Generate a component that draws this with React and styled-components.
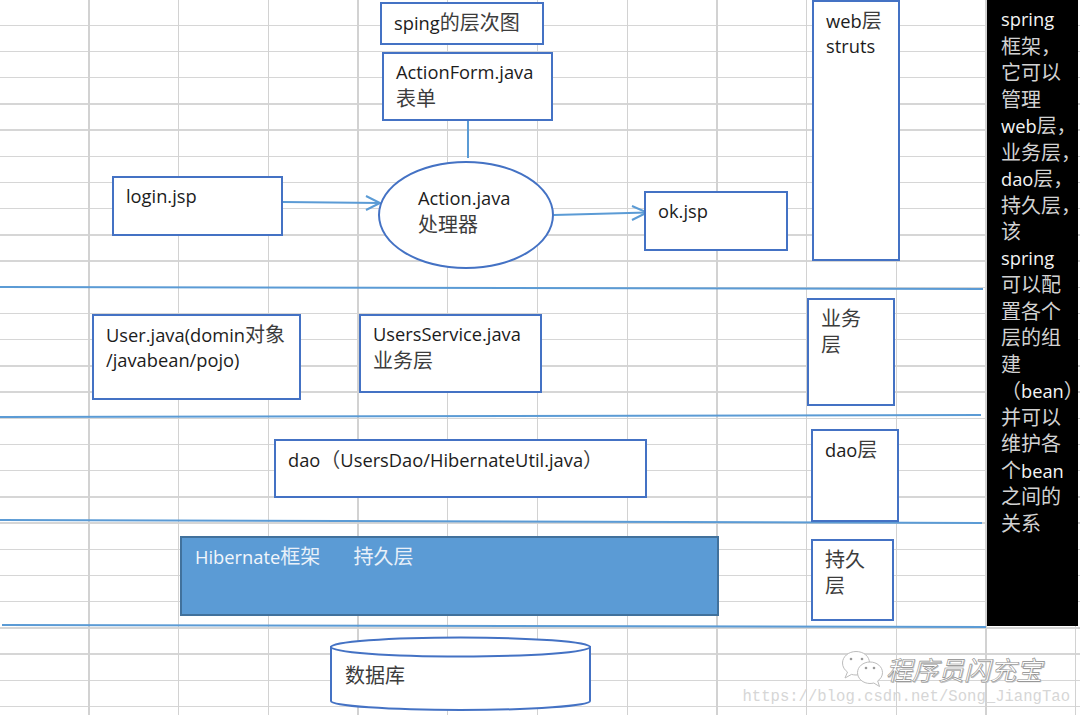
import React from "react";
import styled, { createGlobalStyle } from "styled-components";

const GlobalStyle = createGlobalStyle`
  html, body {
    margin: 0;
    padding: 0;
    background: #fff;
  }
`;

//splits latin and chinese so the chinese can sit a bit larger, like the original
const Label = ({ children }) =>
  children.split(/([^\x00-\x7f]+)/).map((part, i) =>
    i % 2 ? <Han key={i}>{part}</Han> : part
  );

const Lines = ({ items }) =>
  items.map((line, i) => (
    <Line key={i}>
      <Label>{line}</Label>
    </Line>
  ));

const sideTop = [
  "spring",
  "框架，",
  "它可以",
  "管理",
  "web层，",
  "业务层，",
  "dao层，",
  "持久层，",
  "该",
  "spring",
  "可以配",
  "置各个",
  "层的组",
  "建",
];

const sideBottom = ["并可以", "维护各", "个bean", "之间的", "关系"];

function App() {
  return (
    <Sheet>
      <GlobalStyle />
      <Connectors viewBox="0 0 1080 715">
        <line x1="0" y1="287" x2="983" y2="289" />
        <line x1="0" y1="417" x2="981" y2="415" />
        <line x1="0" y1="520" x2="982" y2="523" />
        <line x1="2" y1="625" x2="986" y2="627" />
        <line x1="468" y1="121" x2="468" y2="158" />
        <line x1="283" y1="202" x2="380" y2="203" />
        <polyline points="366,196 380,203 366,210" />
        <line x1="554" y1="215" x2="647" y2="212.5" />
        <polyline points="632,206 647,212.5 632,220" />
      </Connectors>

      <Node $x={380} $y={2} $w={164} $h={43}>
        <Lines items={["sping的层次图"]} />
      </Node>
      <Node $x={382} $y={52} $w={171} $h={69}>
        <Lines items={["ActionForm.java", "表单"]} />
      </Node>
      <Node $x={112} $y={176} $w={171} $h={60}>
        <Lines items={["login.jsp"]} />
      </Node>
      <Handler>
        <Lines items={["Action.java", "处理器"]} />
      </Handler>
      <Node $x={644} $y={191} $w={144} $h={60}>
        <Lines items={["ok.jsp"]} />
      </Node>
      <Node $x={812} $y={0} $w={88} $h={261}>
        <Lines items={["web层", "struts"]} />
      </Node>

      <Node $x={92} $y={314} $w={209} $h={86}>
        <Lines items={["User.java(domin对象", "/javabean/pojo)"]} />
      </Node>
      <Node $x={359} $y={314} $w={183} $h={79}>
        <Lines items={["UsersService.java", "业务层"]} />
      </Node>
      <Node $x={807} $y={298} $w={88} $h={108}>
        <Lines items={["业务", "层"]} />
      </Node>

      <Node $x={274} $y={439} $w={373} $h={59}>
        <Lines items={["dao（UsersDao/HibernateUtil.java）"]} />
      </Node>
      <Node $x={811} $y={429} $w={88} $h={93}>
        <Lines items={["dao层"]} />
      </Node>

      <Persistence>
        <Lines items={["Hibernate框架       持久层"]} />
      </Persistence>
      <Node $x={811} $y={539} $w={83} $h={82}>
        <Lines items={["持久", "层"]} />
      </Node>

      <Database viewBox="0 0 1080 715">
        <path d="M331 647 L331 701 A129.5 9 0 0 0 590 701 L590 647 Z" />
        <ellipse cx="460.5" cy="647" rx="129.5" ry="9.5" />
      </Database>
      <DatabaseName>
        <Lines items={["数据库"]} />
      </DatabaseName>

      <SidePanel>
        <Lines items={sideTop} />
        <Line>
          <Han>（</Han>bean<ClosingParen>）</ClosingParen>
        </Line>
        <Lines items={sideBottom} />
      </SidePanel>

      <Watermark>
        <Account>
          <WechatMark viewBox="0 0 44 38">
            <path d="M15 1.500C7.500 1.500 1.500 6.700 1.500 13c0 3.700 2 7 5 9l-2.500 6 6.500-3.600c1.400.4 3 .6 4.500.6 7.500 0 13.500-5.200 13.500-12S22.500 1.500 15 1.500z" />
            <path d="M29 12c-7 0-12.500 4.800-12.500 10.700S22 33.500 29 33.500c1.300 0 2.600-.2 3.800-.5l5.700 3.500-1.800-5.600c3-2 4.800-5 4.800-8.200C41.500 16.800 36 12 29 12z" />
            <circle className="eye" cx="10" cy="9" r="1.300" />
            <circle className="eye" cx="21" cy="9" r="1.300" />
            <circle className="eye" cx="25" cy="18" r="1.300" />
            <circle className="eye" cx="33" cy="18" r="1.300" />
          </WechatMark>
          <AccountName>程序员闪充宝</AccountName>
        </Account>
        <BlogUrl>https://blog.csdn.net/Song_JiangTao</BlogUrl>
      </Watermark>
    </Sheet>
  );
}

const Sheet = styled.div`
  position: relative;
  display: flex;
  justify-content: flex-end;
  align-items: flex-start;
  width: 1080px;
  height: 715px;
  box-sizing: border-box;
  padding-right: 2px;
  overflow: hidden;
  background-color: #fff;
  background-image: repeating-linear-gradient(
      to right,
      transparent 0 88.4px,
      #d2d2d2 88.4px 89.7px
    ),
    repeating-linear-gradient(
      to bottom,
      transparent 0 24.6px,
      #d6d6d6 24.6px 26px,
      transparent 26px 26.2px
    );
  font-family: "Open Sans", "Noto Sans", "Noto Sans CJK SC", sans-serif;
  font-size: 18.3px;
  color: #1c1c1c;
`;

const Han = styled.span`
  font-family: "Noto Sans CJK SC", sans-serif;
  font-size: 20px;
  color: #3c3c3c;
`;

const ClosingParen = styled(Han)`
  letter-spacing: -4px;
`;

const Line = styled.div`
  height: 26.2px;
  line-height: 26.2px;
  white-space: pre;
`;

const Connectors = styled.svg`
  position: absolute;
  inset: 0;
  width: 1080px;
  height: 715px;
  fill: none;
  stroke: #5b9bd5;
  stroke-width: 2;
`;

const Node = styled.div`
  position: absolute;
  left: ${(props) => props.$x}px;
  top: ${(props) => props.$y}px;
  width: ${(props) => props.$w}px;
  height: ${(props) => props.$h}px;
  box-sizing: border-box;
  padding: 5px 12px;
  background: #fff;
  border: 2px solid #4472c4;
`;

const Handler = styled.div`
  position: absolute;
  left: 378px;
  top: 161px;
  width: 176px;
  height: 108px;
  box-sizing: border-box;
  padding: 22px 38px;
  background: #fff;
  border: 2px solid #4472c4;
  border-radius: 50%;
`;

const Persistence = styled.div`
  position: absolute;
  left: 180px;
  top: 536px;
  width: 539px;
  height: 80px;
  box-sizing: border-box;
  padding: 5px 13px;
  background: #5b9bd5;
  border: 2px solid #41719c;
  color: #f2f6fb;

  ${Han} {
    color: #e8f0f9;
  }
`;

const Database = styled.svg`
  position: absolute;
  inset: 0;
  width: 1080px;
  height: 715px;
  fill: #fff;
  stroke: #4472c4;
  stroke-width: 2;
`;

const DatabaseName = styled.div`
  position: absolute;
  left: 345px;
  top: 662px;
`;

const SidePanel = styled.aside`
  position: relative;
  flex: 0 0 91px;
  min-width: 0;
  height: 626px;
  box-sizing: border-box;
  padding: 6px 0 0 14px;
  background: #000;
  color: #f4f4f4;

  ${Line} {
    height: 26.5px;
    line-height: 26.5px;
  }

  ${Han} {
    color: #d2d2d2;
  }
`;

const Watermark = styled.div`
  position: absolute;
  right: 10px;
  bottom: 9px;
  display: flex;
  flex-direction: column;
  align-items: flex-end;
`;

const Account = styled.div`
  display: flex;
  align-items: center;
  gap: 4px;
  padding-right: 28px;
`;

const WechatMark = styled.svg`
  width: 44px;
  height: 38px;
  margin-right: -3px;
  fill: #fff;
  stroke: #bdbdbd;
  stroke-width: 1;

  .eye {
    fill: #9a9a9a;
    stroke: none;
  }
`;

const AccountName = styled.div`
  font-family: "Noto Sans CJK SC", sans-serif;
  font-size: 26px;
  line-height: 34px;
  font-style: italic;
  color: #fff;
  -webkit-text-stroke: 0.6px #8c8c8c;
  text-shadow: 1px 1px 0 #c4c4c4;
`;

const BlogUrl = styled.div`
  font-family: "Liberation Mono", monospace;
  font-size: 15.6px;
  line-height: 18px;
  color: #d6d6d6;
`;

export default App;
